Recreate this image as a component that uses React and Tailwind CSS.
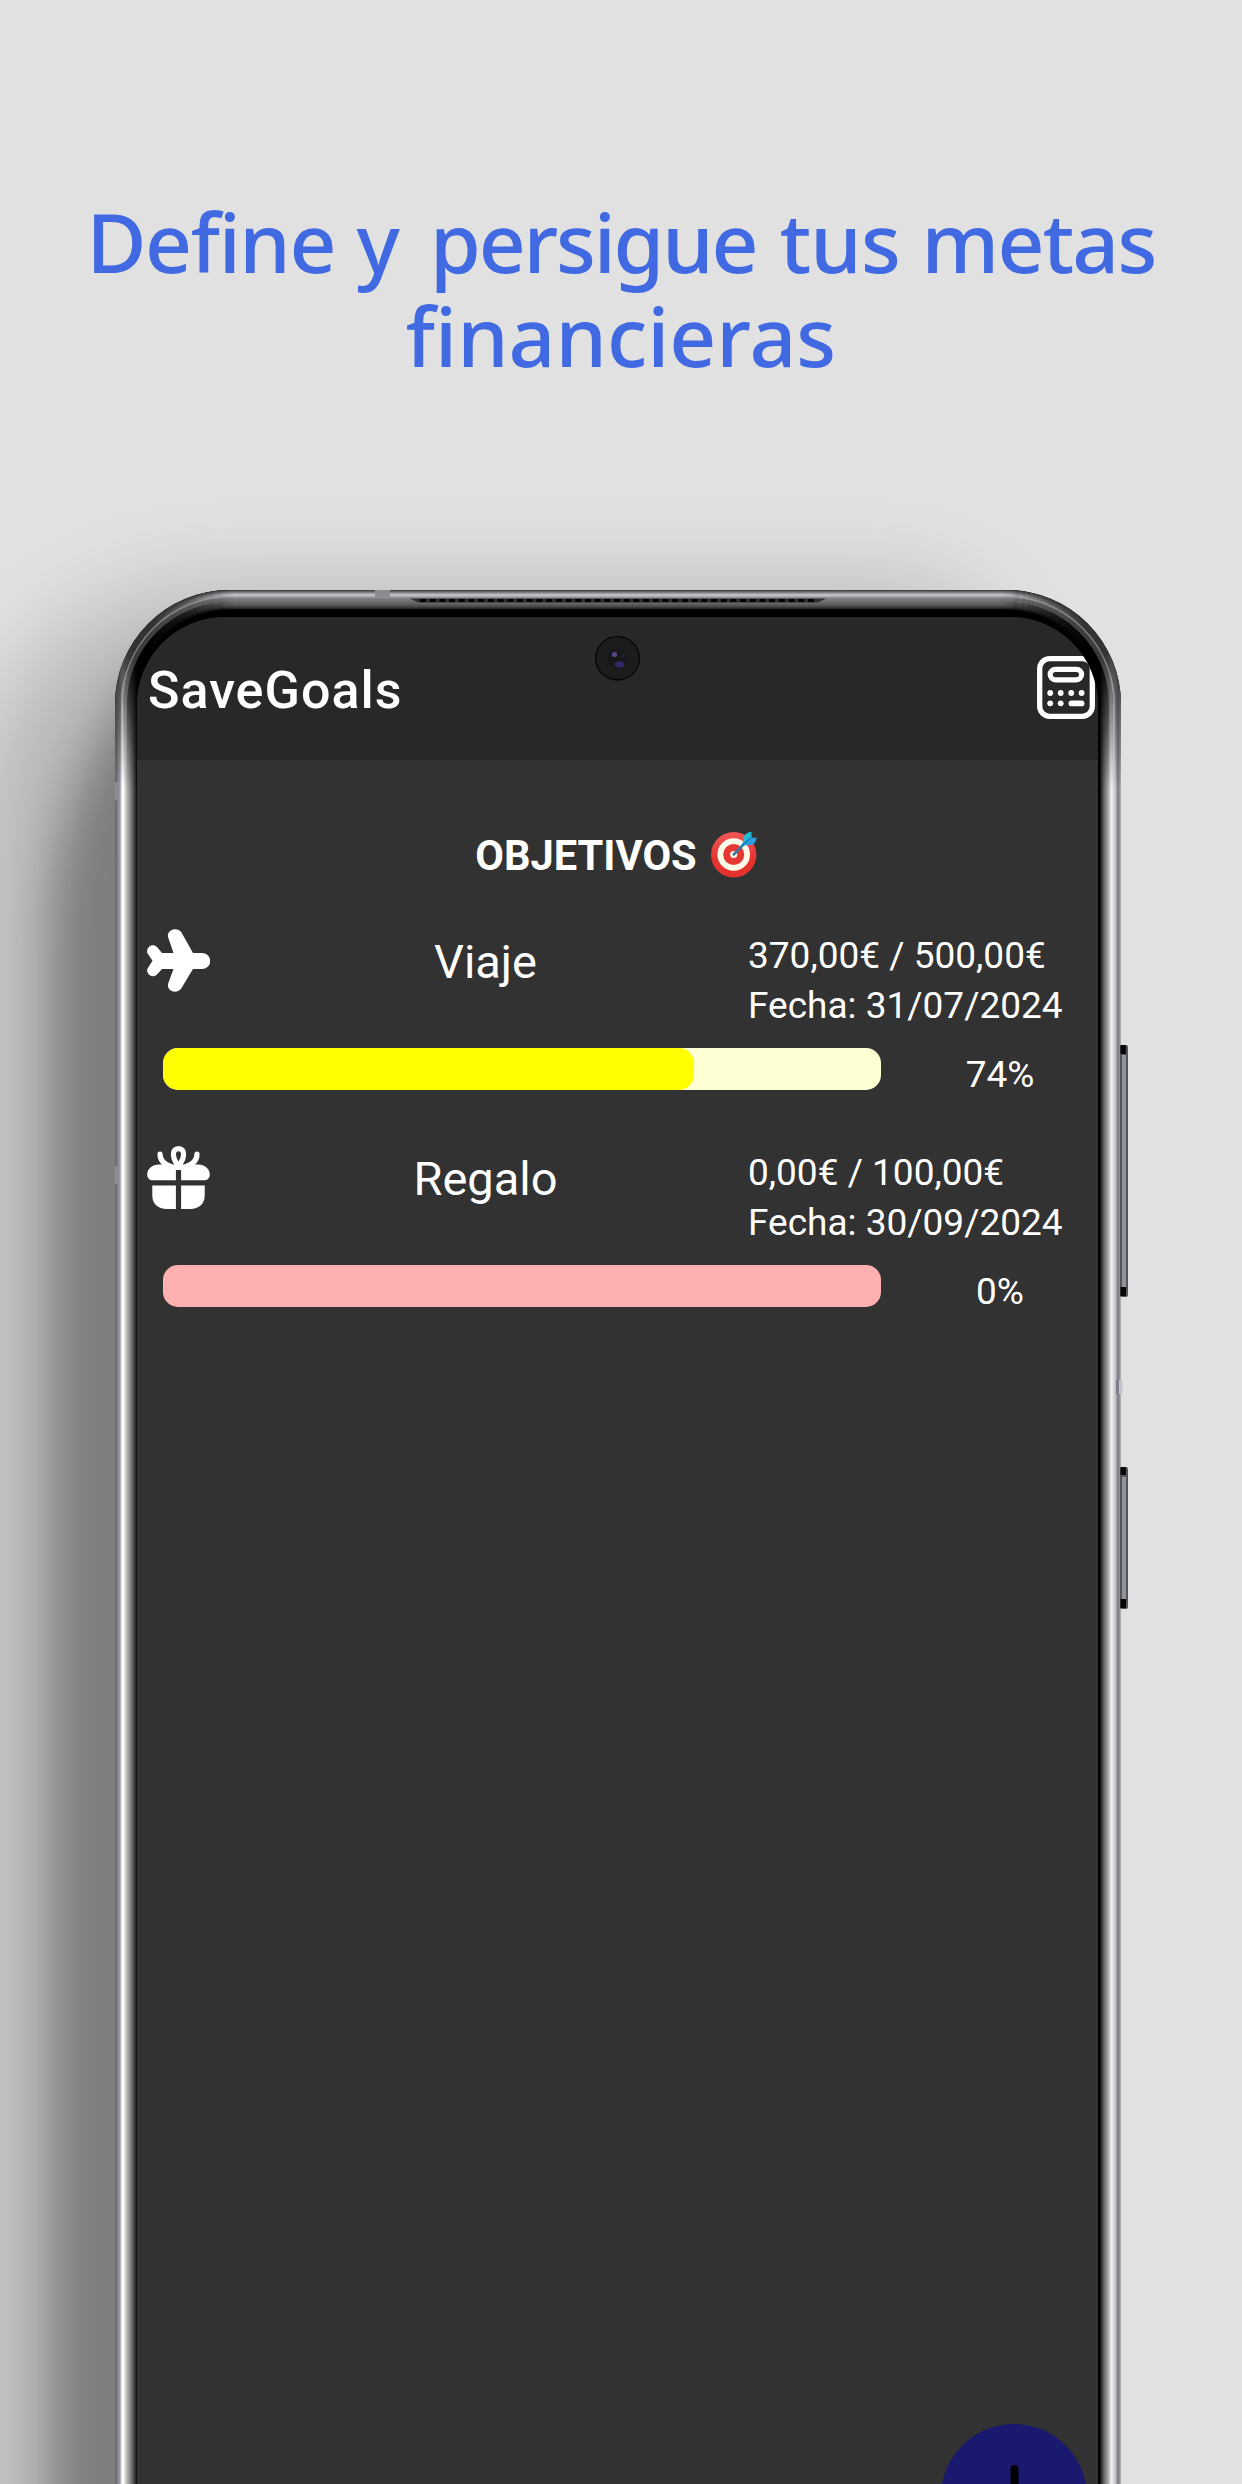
const RIM = [
  [0, "#3c3c3c"], [1, "#5f5d61"], [2, "#77757a"], [3, "#9b989e"], [4, "#bab6bc"], [5, "#c6c2c8"], [6, "#b4b1b6"],
  [7, "#98969a"], [8, "#858488"], [9, "#7b7a7d"], [10, "#767577"], [11, "#707071"], [12, "#6a6a6b"], [13, "#646464"],
  [14, "#5e5e5e"], [15, "#565656"], [16, "#4c4c4c"], [17, "#3e3e3e"], [18, "#262626"],
];

function Device() {
  return (
    <svg className="absolute inset-0" width="1242" height="2484" viewBox="0 0 1242 2484" fill="none" aria-hidden="true">
      <defs>
        <filter id="wide" x="-400" y="300" width="1900" height="2700" filterUnits="userSpaceOnUse"><feGaussianBlur stdDeviation="48" /></filter>
        <filter id="near" x="-400" y="300" width="1900" height="2700" filterUnits="userSpaceOnUse"><feGaussianBlur stdDeviation="22" /></filter>
        <linearGradient id="side" x1="115" x2="1121" y1="0" y2="0" gradientUnits="userSpaceOnUse">
          <stop offset="0" stopColor="#66666c" />
          <stop offset=".002" stopColor="#77777c" />
          <stop offset=".005" stopColor="#a0a0a6" />
          <stop offset=".007" stopColor="#ffffff" />
          <stop offset=".0085" stopColor="#ffffff" />
          <stop offset=".011" stopColor="#c4c6c6" />
          <stop offset=".016" stopColor="#777979" />
          <stop offset=".020" stopColor="#333333" />
          <stop offset=".022" stopColor="#000000" />
          <stop offset=".979" stopColor="#000000" />
          <stop offset=".981" stopColor="#3c3c3c" />
          <stop offset=".984" stopColor="#777777" />
          <stop offset=".988" stopColor="#b4b4b4" />
          <stop offset=".990" stopColor="#f2f2f2" />
          <stop offset=".992" stopColor="#e4e4e4" />
          <stop offset=".995" stopColor="#b8b9c0" />
          <stop offset=".997" stopColor="#77747c" />
          <stop offset="1" stopColor="#b5b5b5" />
        </linearGradient>
        <linearGradient id="fadeDown" x1="0" x2="0" y1="645" y2="790" gradientUnits="userSpaceOnUse">
          <stop offset="0" stopColor="#000" />
          <stop offset=".5" stopColor="#777" />
          <stop offset="1" stopColor="#fff" />
        </linearGradient>
        <linearGradient id="fadeAcross" x1="150" x2="1086" y1="0" y2="0" gradientUnits="userSpaceOnUse">
          <stop offset="0" stopColor="#000" />
          <stop offset=".04" stopColor="#555" />
          <stop offset=".09" stopColor="#fff" />
          <stop offset=".91" stopColor="#fff" />
          <stop offset=".96" stopColor="#555" />
          <stop offset="1" stopColor="#000" />
        </linearGradient>
        <mask id="sideMask"><rect x="100" y="580" width="1060" height="1904" fill="url(#fadeDown)" /></mask>
        <mask id="topMask"><rect x="100" y="580" width="1060" height="120" fill="url(#fadeAcross)" /></mask>
        <clipPath id="body"><rect x="115" y="590" width="1006" height="2200" rx="114" /></clipPath>
      </defs>
      <path d="M-22 2700V860Q-22 592 240 592H890Q1000 592 1000 720V2700Z" fill="#000" opacity=".2" filter="url(#wide)" />
      <path d="M52 2700V930Q56 780 150 672H900V2700Z" fill="#000" opacity=".29" filter="url(#near)" />
      <g clipPath="url(#body)">
        <rect x="110" y="585" width="1020" height="1900" fill="#000" />
        <rect x="118" y="593" width="1000" height="2200" rx="111" stroke="#333334" strokeWidth="7" />
        <rect x="122" y="597" width="992" height="2200" rx="107" stroke="#77767a" strokeWidth="2" />
        <rect x="125" y="600" width="986" height="2200" rx="104" stroke="#3e3e40" strokeWidth="4" />
        <g mask="url(#topMask)">
          {RIM.map(([d, color]) => (
            <rect key={d} x={115.5 + d} y={590.5 + d} width={1005 - 2 * d} height="2200" rx={114 - d} stroke={color} strokeWidth="1.4" />
          ))}
        </g>
        <rect x="110" y="585" width="1020" height="1900" fill="url(#side)" mask="url(#sideMask)" />
      </g>
      <path d="M410 598.500H826L818 602.500H418Z" fill="#303030" />
      <path d="M420 600.5H816" stroke="#000" strokeWidth="3" strokeDasharray="6 3.7" />
      <path d="M375 590H390V597H375Z" fill="#8b8b91" />
      <path d="M114.500 782H119V800H114.500ZM114.500 1166H119V1184H114.500Z" fill="#8c8c92" />
      <path d="M1116 1380H1119V1394H1116Z" fill="#80808a" />
      <path d="M1119 1380H1122.500V1394H1119Z" fill="#c3c3cc" />
      <rect x="1120" y="1045" width="8" height="252" rx="2" fill="#55555b" />
      <rect x="1122" y="1055" width="4" height="232" fill="#92949c" />
      <path d="M1120.500 1045H1126V1054H1120.500ZM1120.500 1287H1126V1296H1120.500Z" fill="#080808" />
      <rect x="1120" y="1467" width="8" height="142" rx="2" fill="#55555b" />
      <rect x="1122" y="1477" width="4" height="122" fill="#92949c" />
      <path d="M1120.500 1467H1126V1475H1120.500ZM1120.500 1599H1126V1608H1120.500Z" fill="#080808" />
    </svg>
  );
}

function Camera() {
  return (
    <svg className="absolute left-[458px] top-[18px]" width="45" height="46" viewBox="0 0 45 46" aria-hidden="true">
      <circle cx="22.5" cy="23.200" r="21.8" fill="#1b1d1c" stroke="#070707" strokeWidth="1.4" />
      <circle cx="22.5" cy="23.200" r="10" fill="#17171a" />
      <circle cx="19.5" cy="19.500" r="2.600" fill="#594588" />
      <circle cx="28" cy="21" r="2.200" fill="#221e36" />
      <ellipse cx="24.500" cy="29.500" rx="5" ry="3.300" fill="#302a68" />
    </svg>
  );
}

function Calculator() {
  return (
    <svg width="58" height="63" viewBox="0 0 58 63" fill="none" stroke="#fff" aria-hidden="true">
      <rect x="2.700" y="2.700" width="52.600" height="57.600" rx="10" strokeWidth="5.300" />
      <rect x="13.200" y="13.400" width="31.400" height="10.400" rx="5.200" strokeWidth="5.200" />
      <g fill="#fff" stroke="none">
        {[13.2, 23.7, 34.2, 44.6].map((x) => <circle key={x} cx={x} cy="37" r="2.900" />)}
        <circle cx="13.200" cy="47.300" r="2.900" />
        <circle cx="23.700" cy="47.300" r="2.900" />
        <rect x="31.500" y="44.500" width="16" height="5.800" rx="2.900" />
      </g>
    </svg>
  );
}

function Target() {
  return (
    <svg width="46" height="47" viewBox="0 0 46 47" aria-hidden="true">
      <defs>
        <linearGradient id="ring" x1="0" x2="0" y1="0" y2="1">
          <stop offset=".1" stopColor="#ef5350" />
          <stop offset=".6" stopColor="#e6322f" />
        </linearGradient>
      </defs>
      <circle cx="22.700" cy="23.700" r="22.700" fill="url(#ring)" />
      <circle cx="22.700" cy="23.500" r="16.300" fill="#fffbe9" />
      <circle cx="22.700" cy="23.500" r="10.500" fill="#e53733" />
      <circle cx="22.700" cy="23.500" r="3.600" fill="#fff3e4" />
      <path d="M22.700 23.500 33 13" stroke="#3979a8" strokeWidth="2.500" strokeLinecap="round" />
      <path d="M31 14.500 33 5.500Q36 .5 40.500 1V6.500L33 13Z" fill="#20bdd5" />
      <path d="M31 14.500 39.500 6.500 45.500 6.800Q45.500 11 41 14Z" fill="#2d9fe0" />
      <path d="M31 14.500 39.500 7" stroke="#1579b8" strokeWidth="1.500" />
    </svg>
  );
}

function Plane() {
  return (
    <svg width="63" height="63" viewBox="0 0 63 63" fill="#fff" aria-hidden="true">
      <path d="M26.500 24 21.200 8.500C19 1 30 -3 34.500 3.500L46 24H55C66 24.500 66 39.500 55 40H46L34.500 59C30 66 19 62 21.200 54.500L26.500 40H15L10 45.500C5.500 50 -1 45 .3 40L5.500 31.700 .3 24C-1 18 5.500 13.500 10 18L15 24Z" />
    </svg>
  );
}

function Gift() {
  return (
    <svg width="63" height="63" viewBox="0 0 63 63" fill="#fff" aria-hidden="true">
      <g fill="none" stroke="#fff" strokeWidth="5.200" strokeLinecap="round">
        <path d="M31.500 20C25 12 24.500 2.700 31.500 2.700S38 12 31.500 20Z" />
        <path d="M13 8C13 13 16 18 24 20.500M50 8C50 13 47 18 39 20.500" />
      </g>
      <path d="M12 18.500H51C58 18.500 62.800 23 62.800 28.500C62.800 32 60.500 34.300 57 34.300H34.100V24H28.900V34.300H6C2.500 34.300 .2 32 .2 28.500C.2 23 5 18.500 12 18.500Z" />
      <path d="M5.300 39.500H28.900V63H20C10.500 63 5.300 57 5.300 50ZM34.100 39.500H57.700V50C57.700 57 52.500 63 43 63H34.100Z" />
    </svg>
  );
}

function Goal({ icon, name, amount, date, percent, track, fill }) {
  return (
    <section className="h-[217px] shrink-0 text-white">
      <div className="flex h-[119px]">
        <div className="w-[158px] shrink-0 pl-[10px] pt-px">{icon}</div>
        <h3 className="w-[381px] shrink-0 pt-[6px] text-center text-[47px] leading-[55px]">{name}</h3>
        <div className="ml-[72px] whitespace-nowrap pt-[3px] text-[37px] leading-[50px]">
          <p>{amount}</p>
          <p>{date}</p>
        </div>
      </div>
      <div className="flex pt-[0.5px]">
        <div className="ml-[26px] h-[42px] w-[718px] shrink-0 overflow-hidden rounded-[15px]" style={{ background: track }}>
          <div className="h-full rounded-[15px]" style={{ width: percent + "%", background: fill }} />
        </div>
        <p className="ml-[20px] w-[198px] shrink-0 pt-[5.500px] text-center text-[37px] leading-[44px]">{percent}%</p>
      </div>
    </section>
  );
}

export default function App() {
  return (
    <main className="relative flex h-[2484px] w-[1242px] flex-col overflow-hidden bg-[#e1e1e1] font-['Roboto',sans-serif]">
      <Device />
      <h1 className="relative h-[617px] pt-[194px] text-center font-['Noto_Sans',sans-serif] text-[82px] font-medium leading-[94px] text-[#4169e1]">
        <span className="block whitespace-nowrap">
          <span className="tracking-[-1.400px]">Define</span> <span>y</span>{" "}
          <span className="ml-[9px] tracking-[-2.200px]">persigue</span> <span className="ml-[2px] tracking-[-0.700px]">tus</span>{" "}
          <span className="tracking-[-1.800px]">metas</span>
        </span>
        <span className="block whitespace-nowrap">financieras</span>
      </h1>
      <div className="relative ml-[137px] flex h-[1867px] w-[961px] flex-col overflow-hidden rounded-tl-[88px] rounded-tr-[88px] bg-[#323232]">
        <header className="flex h-[143px] shrink-0 justify-between bg-[#282828] pl-[11px] pr-[3px] pt-[39px]">
          <h2 className="pt-[3px] text-[52px] font-medium leading-[64px] tracking-[1px] text-white">SaveGoals</h2>
          <Calculator />
        </header>
        <Camera />
        <div className="flex h-[168px] shrink-0 items-start justify-center gap-[14px] pr-[3px] pt-[71px] text-[41.600px] font-bold leading-[49px] text-white">
          <span>OBJETIVOS</span>
          <Target />
        </div>
        <Goal icon={<Plane />} name="Viaje" amount="370,00€ / 500,00€" date="Fecha: 31/07/2024" percent={74} track="#ffffd4" fill="#ffff00" />
        <Goal icon={<Gift />} name="Regalo" amount="0,00€ / 100,00€" date="Fecha: 30/09/2024" percent={0} track="#ffb1b1" fill="#ff0000" />
        <button aria-label="Añadir objetivo" className="absolute left-[804px] top-[1806.500px] flex size-[146px] justify-center rounded-full bg-[#191970] pt-[41px]">
          <svg width="65" height="65" viewBox="0 0 65 65" stroke="#000" strokeWidth="8" strokeLinecap="round" aria-hidden="true"><path d="M32.500 4V61M4 32.500H61" /></svg>
        </button>
      </div>
    </main>
  );
}
